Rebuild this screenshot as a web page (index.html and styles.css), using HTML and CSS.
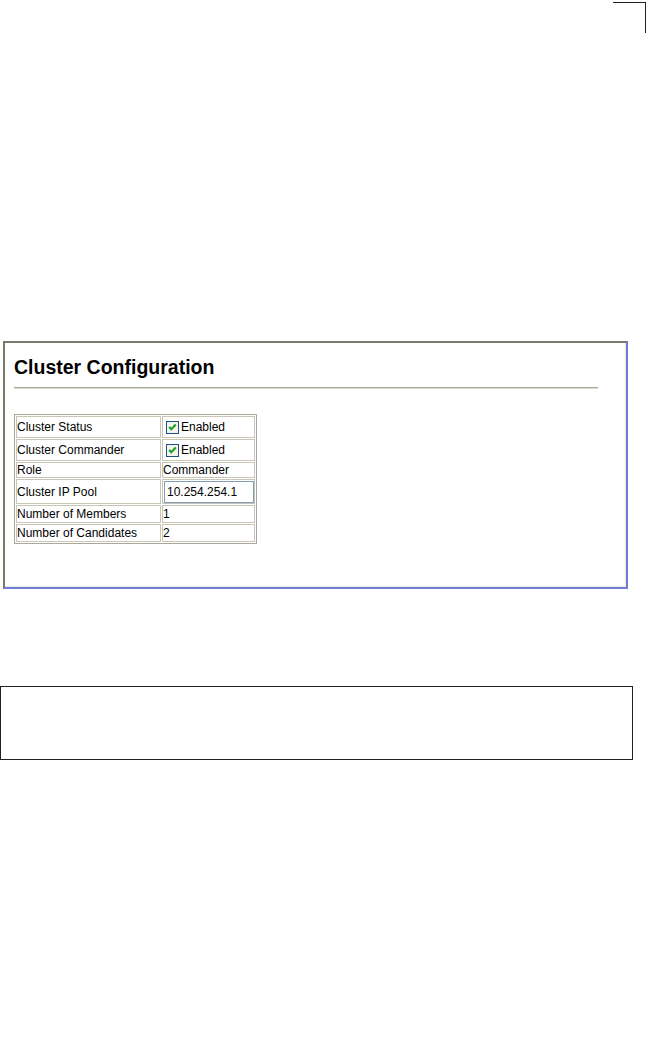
FILE: index.html
```html
<!DOCTYPE html>
<html>
<head>
    <title>Cluster Configuration</title>
    <meta charset="utf-8" />
    <link rel="stylesheet" href="styles.css">
</head>
<body>
    <div class="crop-mark"></div>
    <div class="page">
        <div class="screen">
            <h1 class="screen-title">Cluster Configuration</h1>
            <div class="screen-rule"></div>
            <table class="config-table">
                <tr class="row-check">
                    <td class="label">Cluster Status</td>
                    <td><span class="check"><svg width="13" height="13" viewBox="0 0 13 13"><rect x="0.5" y="0.5" width="12" height="12" fill="#f4f4ee" stroke="#1c5180"/><path d="M3.2 6 L5.3 8.2 L9.8 3.6" fill="none" stroke="#21a121" stroke-width="2.2"/></svg></span>Enabled</td>
                </tr>
                <tr class="row-check">
                    <td class="label">Cluster Commander</td>
                    <td><span class="check"><svg width="13" height="13" viewBox="0 0 13 13"><rect x="0.5" y="0.5" width="12" height="12" fill="#f4f4ee" stroke="#1c5180"/><path d="M3.2 6 L5.3 8.2 L9.8 3.6" fill="none" stroke="#21a121" stroke-width="2.2"/></svg></span>Enabled</td>
                </tr>
                <tr class="row-plain">
                    <td class="label">Role</td>
                    <td>Commander</td>
                </tr>
                <tr class="row-input">
                    <td class="label">Cluster IP Pool</td>
                    <td><input class="ip-input" type="text" value="10.254.254.1" /></td>
                </tr>
                <tr class="row-text">
                    <td class="label">Number of Members</td>
                    <td>1</td>
                </tr>
                <tr class="row-text">
                    <td class="label">Number of Candidates</td>
                    <td>2</td>
                </tr>
            </table>
        </div>
        <div class="note-box"></div>
    </div>
</body>
</html>
```

FILE: styles.css
```css
body{
    margin:0;
    background:#fff;
    font-family:"Liberation Sans", Arial, sans-serif;
    color:#000;
}
.crop-mark{
    position:absolute;
    top:2px;
    right:2px;
    width:32px;
    height:30px;
    border-top:1px solid #231f20;
    border-right:1px solid #231f20;
}
.page{
    padding-top:341px;
}
.screen{
    box-sizing:border-box;
    margin-left:3px;
    width:625px;
    height:248px;
    border-top:2px solid #7b7968;
    border-left:2px solid #7b7968;
    border-right:2px solid #6f7fd9;
    border-bottom:2px solid #6f7fd9;
    box-shadow:inset -1px -1px 0 #ece9d8;
}
.screen-title{
    margin:13px 0 0 9px;
    font-size:19.5px;
    line-height:22px;
    font-weight:bold;
}
.screen-rule{
    margin:9px 0 0 9px;
    width:584px;
    border-top:1px solid #aca899;
    border-bottom:1px solid #ddd9c8;
}
.config-table{
    margin:25px 0 0 9px;
    width:243px;
    border:1px solid #aca899;
    border-spacing:1px;
    font-size:12px;
}
    .config-table td{
        border:1px solid #c9c6b8;
        padding:0;
        vertical-align:middle;
        white-space:nowrap;
    }
    .config-table td.label{
        width:143px;
    }
    .row-check td{
        height:20px;
    }
    .row-plain td{
        height:14px;
    }
    .row-input td{
        height:23px;
    }
    .row-text td{
        height:16px;
    }
.check{
    display:inline-block;
    vertical-align:middle;
    margin:0 2px 0 3px;
    height:13px;
}
.check svg{
    display:block;
}
.ip-input{
    box-sizing:border-box;
    width:90px;
    height:22px;
    margin:0 0 0 1px;
    padding:0 2px;
    border:1px solid #7f9db9;
    font-family:"Liberation Sans", Arial, sans-serif;
    font-size:12px;
    color:#000;
}
.note-box{
    box-sizing:border-box;
    margin-top:97px;
    width:633px;
    height:74px;
    border:1px solid #231f20;
}
```
